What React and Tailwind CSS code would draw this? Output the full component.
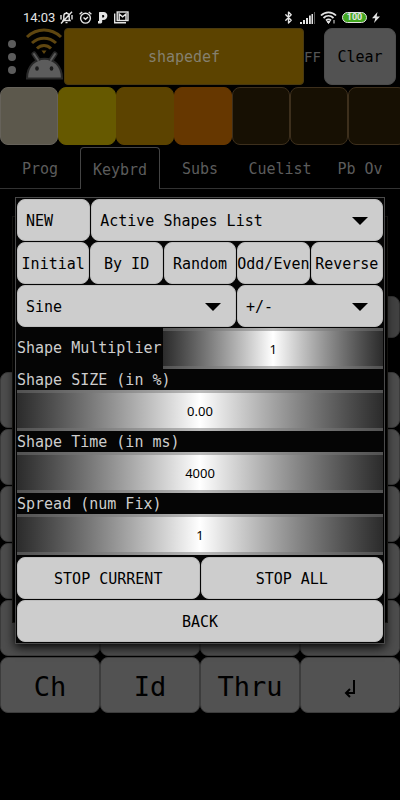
import { Bluetooth } from "lucide-react";

const SWATCHES = [
  { name: "White", cls: "bg-[#5c584c] border-[#66625a]" },
  { name: "Yellow", cls: "bg-[#665900] border-[#665900]" },
  { name: "Amber", cls: "bg-[#5c4300] border-[#5c4300]" },
  { name: "Orange", cls: "bg-[#663700] border-[#663700]" },
  { name: "Off 1", cls: "bg-[#171003] border-[#3d2f1c]" },
  { name: "Off 2", cls: "bg-[#171003] border-[#3d2f1c]" },
  { name: "Off 3", cls: "bg-[#171003] border-[#3d2f1c]" },
];

const TABS = ["Prog", "Keybrd", "Subs", "Cuelist", "Pb Ov"];

const ORDERS = ["Initial", "By ID", "Random", "Odd/Even", "Reverse"];

const WHEELS = [
  { id: "size", label: "Shape SIZE (in %)", value: "0.00" },
  { id: "time", label: "Shape Time (in ms)", value: "4000" },
  { id: "spread", label: "Spread (num Fix)", value: "1" },
];

// Rows of the keypad that stay behind the dialog
const BLANK_KEYS = Array.from({ length: 20 }, (_, i) => i);

function StatusBar() {
  return (
    <div className="flex h-7 items-end justify-between pr-5 pl-[23px] font-[Roboto,sans-serif] text-[13px] leading-[21px] text-[#e4e4e4]">
      <div className="flex h-[21px] items-center gap-[6px]">
        <span className="w-[31px]">14:03</span>
        <svg width="13" height="13" viewBox="0 0 13 13" fill="none" stroke="currentColor" strokeWidth="1.4">
          <path d="M3 9.500h7L9.200 8V5a2.700 2.700 0 0 0-5.400 0v3zM6.500 1v1.500M5.500 11.600h2M1 4v4.500M12 4v4.500M1 12.500L12 .8" />
        </svg>
        <svg width="13" height="13" viewBox="0 0 13 13" fill="none" stroke="currentColor" strokeWidth="1.4">
          <circle cx="6.500" cy="7.200" r="4.900" />
          <path d="M4.500 6.500L6.500 8.300L9 6M.6 3.200L3.200 .9M12.400 3.200L9.800 .9" />
        </svg>
        <svg width="10" height="12" viewBox="0 0 10 12" fill="currentColor">
          <path fillRule="evenodd" d="M1.500 0H5.500C11 0 10.500 8 5 8H4.200V9.500C4.200 11 3.500 11.500 2 11.500H0V9H1V0.500zM4.200 3V5.500H5C6.700 5.500 6.700 3 5 3z" />
        </svg>
        <svg width="15" height="13" viewBox="0 0 15 13" fill="none" stroke="currentColor">
          <path d="M.7 2.500V11.700H12" strokeWidth="1.400" />
          <rect x="3.200" y="1" width="10.800" height="8.500" strokeWidth="1.400" />
          <path d="M5.200 9V3L8.600 5.800L12 3V9" strokeWidth="1.400" />
        </svg>
      </div>
      <div className="flex h-[21px] items-center gap-[5px]">
        <Bluetooth size={13} strokeWidth={2.5} />
        <svg width="15" height="12" viewBox="0 0 15 12" fill="currentColor">
          <path d="M0 10h2v2H0zM3 8h2v4H3zM6 6h2v6H6zM9 3.500h1.800V12H9zM11.500 2h1.500v10h-1.500z" />
          <path d="M14 0h1v12h-1z" opacity="0.400" />
        </svg>
        <svg width="17" height="13" viewBox="0 0 17 13" fill="none" stroke="currentColor" strokeWidth="1.8">
          <path d="M1 4.500C5 .2 12 .2 16 4.500M3.500 7C6.500 4.200 10.500 4.200 13.500 7M6 9.500C7.500 8.200 9.500 8.200 11 9.500" />
          <path d="M7 10.500h3L8.500 12.500zM14 9v3.500" strokeWidth="1" fill="currentColor" />
        </svg>
        <span className="flex h-[11px] w-[25px] items-center justify-center rounded-full border border-[#e4e4e4] bg-[#43a821] text-[9px] leading-none font-bold">
          100
        </span>
        <svg width="8" height="11" viewBox="0 0 8 11" fill="currentColor">
          <path d="M5.500 0L0 6.200H3.300L2 11L8 4.500H4.600z" />
        </svg>
      </div>
    </div>
  );
}

function DroidLogo() {
  return (
    <svg width="38" height="52" viewBox="0 0 38 52" className="shrink-0" aria-hidden="true">
      <g fill="none" stroke="#5f4610" strokeWidth="3">
        <path d="M2 9C12-.2 26-.2 36 9" />
        <path d="M7 15C14 8.500 24 8.500 31 15" />
        <path d="M12 20.500C16 16.500 22 16.500 26 20.500" />
      </g>
      <path d="M16.500 22.500h5L19 26z" fill="#5f4610" />
      <path d="M9 26L13 32M30 26L26 32" stroke="#282828" strokeWidth="5" strokeLinecap="round" />
      <path d="M2 50.500C2 24 37 24 37 50.500z" fill="#5c5c5c" stroke="#282828" strokeWidth="2" />
      <path d="M9 26L13 32M30 26L26 32" stroke="#5c5c5c" strokeWidth="2" strokeLinecap="round" />
      <ellipse cx="12" cy="40.500" rx="1.800" ry="2.200" fill="#1c1c1c" />
      <ellipse cx="26.500" cy="40.500" rx="1.800" ry="2.200" fill="#1c1c1c" />
    </svg>
  );
}

function Header() {
  return (
    <header className="flex h-[57px] items-stretch">
      <button aria-label="Menu" className="flex w-6 shrink-0 flex-col items-center justify-center gap-[5px] pr-px">
        <span className="size-2 rounded-full bg-[#5c5c5c]" />
        <span className="size-2 rounded-full bg-[#5c5c5c]" />
        <span className="size-2 rounded-full bg-[#5c5c5c]" />
      </button>
      <div className="flex w-10 shrink-0 justify-center">
        <DroidLogo />
      </div>
      <button className="grow rounded-sm border border-[#4a3a10] bg-[#5c4300] pt-[2px] text-[#85806f]">shapedef</button>
      <span className="flex w-5 shrink-0 items-center overflow-hidden text-sm text-[#555]">FF</span>
      <button className="mr-1 w-18 shrink-0 rounded-lg border border-[#4b4b4b] bg-[#525252] pt-[2px] text-black">Clear</button>
    </header>
  );
}

function Tabs() {
  return (
    <nav className="mt-[2px] flex h-[42px]">
      {TABS.map((tab) => (
        <button
          key={tab}
          className={
            tab === "Keybrd"
              ? "w-1/5 shrink-0 rounded-t-sm border border-b-0 border-[#444] pt-[3px] text-[#5c5c5c]"
              : "w-1/5 shrink-0 border-b border-[#333] pt-1 text-[#5c5c5c]"
          }
        >
          {tab}
        </button>
      ))}
    </nav>
  );
}

function Key({ children }) {
  return (
    <button className="h-14 rounded-lg border border-[#3c3c3c] bg-[#525252] pt-1 text-[27px] text-black">{children}</button>
  );
}

function Keypad() {
  return (
    <main>
      <div className="mt-[107px] flex justify-end">
        <div className="h-[42px] w-1/4 rounded-lg border border-[#333] bg-[#424242]" />
      </div>
      <div className="mt-[34px] grid grid-cols-4 gap-y-px">
        {BLANK_KEYS.map((k) => (
          <div key={k} className="h-14 rounded-lg border border-[#3c3c3c] bg-[#4d4d4d]" />
        ))}
        <Key>Ch</Key>
        <Key>Id</Key>
        <Key>Thru</Key>
        <Key>
          <svg width="12" height="20" viewBox="0 0 12 20" className="mx-auto mt-1" fill="none" stroke="black" strokeWidth="2" role="img" aria-label="Enter">
            <path d="M10 1V14H2M6 10L2 14L6 18" />
          </svg>
        </Key>
      </div>
    </main>
  );
}

function Button({ children, className = "" }) {
  return (
    <button
      className={`h-[42px] min-w-0 rounded-lg border border-[#bdbdbd] bg-[#cdcdcd] pt-[2px] whitespace-nowrap text-black ${className}`}
    >
      {children}
    </button>
  );
}

function Dropdown({ label, className }) {
  return (
    <div className={`relative h-[42px] ${className}`}>
      <select
        aria-label={label}
        className="size-full appearance-none rounded-lg border border-[#bdbdbd] bg-[#cdcdcd] pt-[2px] pl-2 text-black"
      >
        <option>{label}</option>
      </select>
      <svg width="16" height="8" viewBox="0 0 16 8" className="pointer-events-none absolute top-[18px] right-[15px]">
        <path d="M0 0h16L8 8z" />
      </svg>
    </div>
  );
}

function Wheel({ id, value }) {
  return (
    <input
      id={id}
      defaultValue={value}
      className="h-[41px] w-full min-w-0 border-y-[3px] border-[#777]/50 bg-linear-to-r from-[#2b2b2b] via-white to-[#2b2b2b] text-center font-[Noto_Sans,sans-serif] text-[13px] text-black"
    />
  );
}

function ShapeDialog() {
  return (
    <div
      role="dialog"
      aria-label="Shapes"
      className="absolute inset-x-[15px] top-[197px] flex flex-col border border-[#4a4a4a] bg-[#050505] p-px shadow-[0_3px_10px_black]"
    >
      <div className="flex flex-col gap-px">
        <div className="flex gap-px">
          <Button className="w-1/5 pl-2 text-left">NEW</Button>
          <Dropdown label="Active Shapes List" className="grow" />
        </div>
        <div className="grid grid-cols-5 gap-px">
          {ORDERS.map((order) => (
            <Button key={order} className="flex items-center justify-center">
              {order}
            </Button>
          ))}
        </div>
        <div className="flex gap-px">
          <Dropdown label="Sine" className="w-3/5" />
          <Dropdown label="+/-" className="w-2/5" />
        </div>
      </div>
      <div className="mt-px flex items-center">
        <label htmlFor="multiplier" className="w-2/5 shrink-0 whitespace-nowrap text-[#cdcdcd]">
          Shape Multiplier
        </label>
        <Wheel id="multiplier" value="1" />
      </div>
      {WHEELS.map(({ id, label, value }) => (
        <div key={id} className="flex flex-col">
          <label htmlFor={id} className="h-[21px] leading-[23px] text-[#cdcdcd]">
            {label}
          </label>
          <Wheel id={id} value={value} />
        </div>
      ))}
      <div className="mt-[2px] grid grid-cols-2 gap-px">
        <Button>STOP CURRENT</Button>
        <Button>STOP ALL</Button>
        <Button className="col-span-2">BACK</Button>
      </div>
    </div>
  );
}

export default function App() {
  return (
    <div className="relative min-h-screen overflow-hidden bg-black font-[DejaVu_Sans_Mono,monospace] text-[15px]">
      <StatusBar />
      <Header />
      <div className="mt-[2px] flex">
        {SWATCHES.map(({ name, cls }) => (
          <button key={name} aria-label={name} className={`h-[58px] w-[58px] shrink-0 rounded-lg border ${cls}`} />
        ))}
      </div>
      <Tabs />
      <Keypad />
      {/* first popup, its edges show round the shape dialog */}
      <div className="absolute inset-x-3 top-[216px] h-[407px] border border-[#1e1c18] bg-black" />
      <ShapeDialog />
    </div>
  );
}
